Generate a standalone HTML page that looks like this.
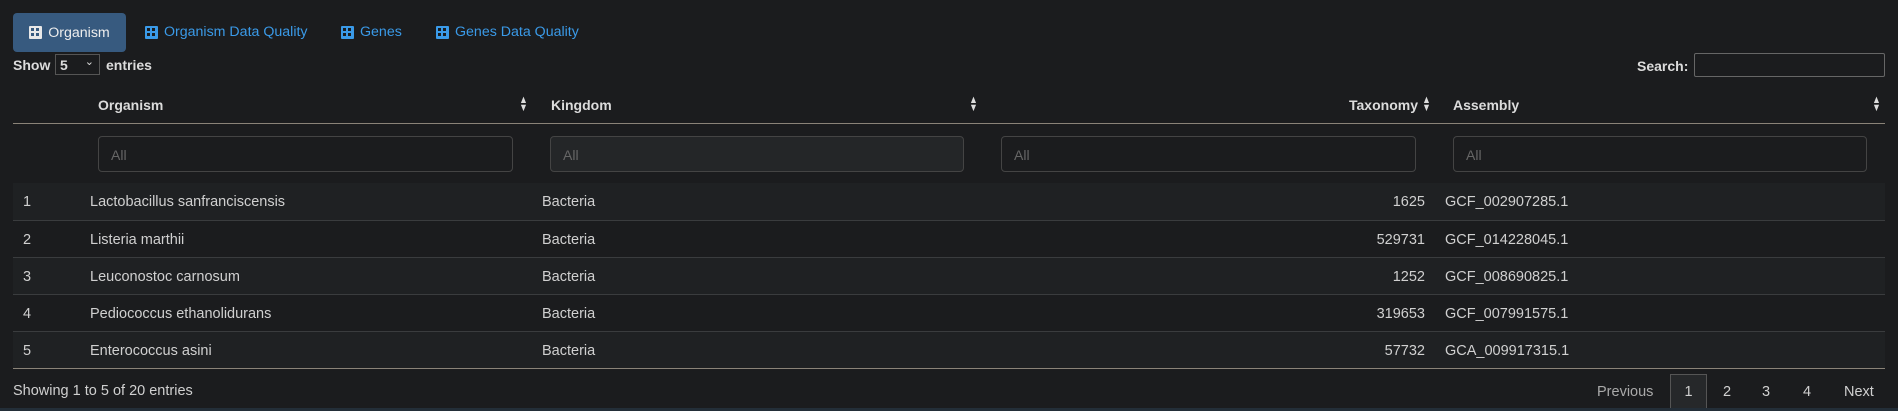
<!DOCTYPE html>
<html><head><style>
body{margin:0;width:1898px;height:411px;background:#1b1c1e;font-family:"Liberation Sans",sans-serif;color:#d0d0d0;position:relative;overflow:hidden;font-size:14.5px}
.a{position:absolute;white-space:nowrap}
.tab{color:#3a9ae8;font-size:14.2px;display:flex;align-items:center;gap:6px}
.ic{width:13px;height:13px;background:#3a9ae8;position:relative;border-radius:1px}
.ic:before{content:"";position:absolute;left:2px;top:2px;width:3px;height:3px;background:#1b1c1e;box-shadow:5px 0 #1b1c1e,0 5px #1b1c1e,5px 5px #1b1c1e}
.act .ic{background:#e8e8e8}.act .ic:before{background:#375a7f;box-shadow:5px 0 #375a7f,0 5px #375a7f,5px 5px #375a7f}
.b{font-weight:bold;font-size:14px;color:#dcdcdc}
.inp{position:absolute;top:136px;height:36px;box-sizing:border-box;border:1px solid #444;border-radius:4px;color:#666;padding:10px 12px;font-size:14px}
.row{position:absolute;left:13px;width:1872px;height:37px;border-top:1px solid #3a3c3e}
.row span{position:absolute;top:11px}
.sort{position:absolute;top:96px;font-size:11px;line-height:8px;color:#ddd;transform:scaleX(0.8)}
</style></head><body>
<div class="a tab act" style="left:13px;top:13px;width:113px;height:39px;background:#375a7f;border-radius:4px;color:#eee;justify-content:center">
<div class="ic"></div>Organism</div>
<div class="a tab" style="left:145px;top:24px"><div class="ic"></div>Organism Data Quality</div>
<div class="a tab" style="left:341px;top:24px"><div class="ic"></div>Genes</div>
<div class="a tab" style="left:436px;top:24px"><div class="ic"></div>Genes Data Quality</div>
<div class="a b" style="left:13px;top:57px">Show</div>
<div class="a b" style="left:55px;top:54px;width:45px;height:21px;border:1px solid #555;box-sizing:border-box;padding:2px 4px">5<span style="position:absolute;right:5px;top:0;font-weight:normal;font-size:11px">⌄</span></div>
<div class="a b" style="left:106px;top:57px">entries</div>
<div class="a b" style="left:1637px;top:58px">Search:</div>
<div class="a" style="left:1694px;top:53px;width:191px;height:24px;border:1px solid #666;box-sizing:border-box;border-radius:2px"></div>
<div class="a b" style="left:98px;top:97px">Organism</div>
<div class="a b" style="left:551px;top:97px">Kingdom</div>
<div class="a b" style="left:1349px;top:97px;width:67px;text-align:right">Taxonomy</div>
<div class="a b" style="left:1453px;top:97px">Assembly</div>
<div class="sort" style="left:518px">▲<br>▼</div>
<div class="sort" style="left:968px">▲<br>▼</div>
<div class="sort" style="left:1421px">▲<br>▼</div>
<div class="sort" style="left:1871px">▲<br>▼</div>
<div class="a" style="left:13px;top:123px;width:1872px;height:1px;background:#8a8378"></div>
<div class="inp" style="left:98px;width:415px">All</div>
<div class="inp" style="left:550px;width:414px;background:#242628">All</div>
<div class="inp" style="left:1001px;width:415px">All</div>
<div class="inp" style="left:1453px;width:414px">All</div>
<div class="a" style="left:13px;top:183px;width:1872px;height:1px;background:#8a8378"></div>
<div class="row" style="top:183px;border-top:none;background:#1f2123"><span style="left:10px">1</span><span style="left:77px">Lactobacillus sanfranciscensis</span><span style="left:529px">Bacteria</span><span style="right:460px">1625</span><span style="left:1432px">GCF_002907285.1</span></div>
<div class="row" style="top:220px"><span style="left:10px">2</span><span style="left:77px">Listeria marthii</span><span style="left:529px">Bacteria</span><span style="right:460px">529731</span><span style="left:1432px">GCF_014228045.1</span></div>
<div class="row" style="top:257px;background:#1f2123"><span style="left:10px">3</span><span style="left:77px">Leuconostoc carnosum</span><span style="left:529px">Bacteria</span><span style="right:460px">1252</span><span style="left:1432px">GCF_008690825.1</span></div>
<div class="row" style="top:294px"><span style="left:10px">4</span><span style="left:77px">Pediococcus ethanolidurans</span><span style="left:529px">Bacteria</span><span style="right:460px">319653</span><span style="left:1432px">GCF_007991575.1</span></div>
<div class="row" style="top:331px;background:#1f2123"><span style="left:10px">5</span><span style="left:77px">Enterococcus asini</span><span style="left:529px">Bacteria</span><span style="right:460px">57732</span><span style="left:1432px">GCA_009917315.1</span></div>
<div class="a" style="left:13px;top:368px;width:1872px;height:1px;background:#8a8378"></div>
<div class="a" style="left:13px;top:383px">Showing 1 to 5 of 20 entries</div>
<div class="a" style="left:1597px;top:384px;color:#aaa">Previous</div>
<div class="a" style="left:1670px;top:374px;width:37px;height:36px;box-sizing:border-box;border:1px solid #555;background:#26282a;text-align:center;padding-top:9px">1</div>
<div class="a" style="left:1723px;top:384px">2</div>
<div class="a" style="left:1762px;top:384px">3</div>
<div class="a" style="left:1803px;top:384px">4</div>
<div class="a" style="left:1844px;top:384px">Next</div>
<div class="a" style="left:0;top:408px;width:1898px;height:3px;background:#232e38"></div>
</body></html>
